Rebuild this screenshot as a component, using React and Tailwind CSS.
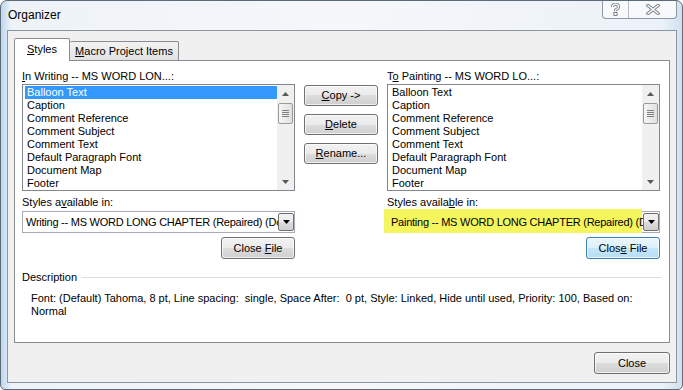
import React from "react";

const styleNames = [
  "Balloon Text",
  "Caption",
  "Comment Reference",
  "Comment Subject",
  "Comment Text",
  "Default Paragraph Font",
  "Document Map",
  "Footer",
];

const Arrow = ({ up, color = "#5a5a5a" }) => (
  <svg width="7" height="4" viewBox="0 0 7 4">
    <path d={up ? "M3.5 0L7 4H0Z" : "M0 0H7L3.5 4Z"} fill={color} />
  </svg>
);

const ScrollBar = () => (
  <div className="flex w-[17px] flex-col items-center bg-[#f0f0f0]">
    <div className="flex h-[17px] w-full items-center justify-center">
      <Arrow up />
    </div>
    <div className="mt-[1px] flex h-[21px] w-[15px] flex-col items-center justify-center gap-[1px] rounded-[2px] border border-[#9a9a9a] bg-[linear-gradient(90deg,#f6f6f6,#e0e0e0)]">
      <div className="h-px w-[7px] bg-[#808080]" />
      <div className="h-px w-[7px] bg-[#808080]" />
      <div className="h-px w-[7px] bg-[#808080]" />
      <div className="h-px w-[7px] bg-[#808080]" />
    </div>
    <div className="flex-1" />
    <div className="flex h-[17px] w-full items-center justify-center">
      <Arrow />
    </div>
  </div>
);

const StyleList = ({ selected }) => (
  <div className="mt-[1px] flex h-[107px] border border-[#828790] bg-white">
    <div className="flex flex-1 flex-col pl-[2px] pt-[1px]">
      {styleNames.map((name, i) => (
        <div
          key={name}
          className={`h-[13px] pl-[2px] text-[11px] leading-[13px] ${
            selected && i === 0 ? "bg-[#3399ff] text-white" : "text-black"
          }`}
        >
          {name}
        </div>
      ))}
    </div>
    <ScrollBar />
  </div>
);

const Combo = ({ text, highlight }) => (
  <div className="relative mt-[2px] flex h-[22px] border border-[#a5acb5] bg-white">
    {highlight && (
      <div className="absolute left-[-4px] top-[-3px] h-[24px] w-[258px] bg-[#f5f55e]" />
    )}
    <div className="relative flex-1 overflow-hidden whitespace-nowrap pl-[3px] text-[11px] leading-[20px] tracking-[-0.25px]">
      {text}
    </div>
    <div className="relative my-[1px] flex w-[16px] items-center justify-center rounded-[2px] border border-[#707070] bg-[linear-gradient(#f2f2f2_0%,#ebebeb_50%,#dddddd_50%,#cfcfcf_100%)]">
      <Arrow color="#000" />
    </div>
  </div>
);

const Btn = ({ children, className = "", focused = false }) => (
  <button
    className={`flex items-center justify-center rounded-[3px] border text-[11px] text-black shadow-[inset_0_0_0_1px_rgba(255,255,255,0.7)] ${
      focused
        ? "border-[#3c7fb1] bg-[linear-gradient(#eaf6fd_0%,#dcf0fb_50%,#c6e6f8_50%,#b6def5_100%)]"
        : "border-[#707070] bg-[linear-gradient(#f2f2f2_0%,#ebebeb_50%,#dddddd_50%,#cfcfcf_100%)]"
    } ${className}`}
  >
    {children}
  </button>
);

const Column = ({ label, comboLabel, comboText, selected, highlight, focused }) => (
  <div className="flex w-[273px] flex-col">
    <div className="h-[13px] text-[11px] leading-[13px]">{label}</div>
    <StyleList selected={selected} />
    <div className="mt-[5px] h-[13px] text-[11px] leading-[13px]">{comboLabel}</div>
    <Combo text={comboText} highlight={highlight} />
    <div className="mt-[4px] flex justify-end">
      <Btn focused={focused} className="h-[22px] w-[74px]">
        {focused ? (
          <span>
            Clos<span className="underline">e</span> File
          </span>
        ) : (
          <span>
            Close <span className="underline">F</span>ile
          </span>
        )}
      </Btn>
    </div>
  </div>
);

const App = () => {
  return (
    <div className="h-[390px] w-[683px] overflow-hidden font-['Liberation_Sans',Arial,sans-serif] text-black">
      <div className="flex h-full flex-col rounded-t-[7px] rounded-b-[5px] border border-[#5d6b79] bg-[linear-gradient(90deg,#bcd6ee_0%,#eef3f8_1.5%,#f5f7fa_50%,#ecf2f8_97%,#cfe0f0_100%)]">
        {/* title bar */}
        <div className="flex h-[29px] items-start">
          <div className="pl-[7px] pt-[6px] text-[12px] leading-[16px]">Organizer</div>
          <div className="ml-auto mr-[5px] flex h-[18px] rounded-b-[4px] border border-t-0 border-[#8c98a5] bg-[#f7f9fb]">
            <div className="flex w-[26px] items-center justify-center border-r border-[#b5bec8]">
              <svg width="9" height="13" viewBox="0 0 9 13">
                <path
                  d="M1.5 4Q1.5 1.2 4.5 1.2Q7.5 1.2 7.5 3.8Q7.5 5.6 5.2 6.5L4.5 7V8.3"
                  fill="none"
                  stroke="#7a848e"
                  strokeWidth="3"
                />
                <path
                  d="M1.5 4Q1.5 1.2 4.5 1.2Q7.5 1.2 7.5 3.8Q7.5 5.6 5.2 6.5L4.5 7V8.3"
                  fill="none"
                  stroke="#fff"
                  strokeWidth="1.2"
                />
                <rect x="3" y="9.5" width="3" height="3" fill="#fff" stroke="#7a848e" strokeWidth="1" />
              </svg>
            </div>
            <div className="flex w-[47px] items-center justify-center">
              <svg width="14" height="11" viewBox="0 0 14 11">
                <path d="M2 1.5L12 9.5M12 1.5L2 9.5" stroke="#7a848e" strokeWidth="3.4" strokeLinecap="square" />
                <path d="M2 1.5L12 9.5M12 1.5L2 9.5" stroke="#fff" strokeWidth="1.4" strokeLinecap="square" />
              </svg>
            </div>
          </div>
        </div>

        {/* client area */}
        <div className="ml-[6px] mr-[5px] flex flex-col border border-[#8d96a0] bg-[#f0f0f0] px-[6px] pb-[8px] pt-[7px]">
          {/* tabs */}
          <div className="relative z-10 flex h-[22px] items-end">
            <div className="-mb-px flex h-[23px] w-[56px] items-center justify-center rounded-t-[2px] border border-b-0 border-[#898c95] bg-white pb-[1px] text-[11px]">
              <span>
                <span className="underline">S</span>tyles
              </span>
            </div>
            <div className="flex h-[19px] w-[109px] items-center justify-center rounded-t-[2px] border border-b-0 border-l-0 border-[#898c95] bg-[linear-gradient(#f3f3f3,#e1e1e1)] text-[11px]">
              <span>
                <span className="underline">M</span>acro Project Items
              </span>
            </div>
          </div>

          {/* tab panel */}
          <div className="flex h-[283px] flex-col border border-[#898c95] bg-white pl-[7px] pr-[8px] pt-[9px]">
            <div className="flex items-start">
              <Column
                label={
                  <span>
                    <span className="underline">I</span>n Writing -- MS WORD LON...:
                  </span>
                }
                comboLabel={
                  <span>
                    Styles a<span className="underline">v</span>ailable in:
                  </span>
                }
                comboText="Writing -- MS WORD LONG CHAPTER (Repaired) (Do"
                selected
              />
              <div className="ml-[9px] mt-[15px] flex w-[74px] flex-col gap-[8px]">
                <Btn className="h-[21px] w-full">
                  <span>
                    <span className="underline">C</span>opy -&gt;
                  </span>
                </Btn>
                <Btn className="h-[21px] w-full">
                  <span>
                    <span className="underline">D</span>elete
                  </span>
                </Btn>
                <Btn className="h-[21px] w-full">
                  <span>
                    <span className="underline">R</span>ename...
                  </span>
                </Btn>
              </div>
              <div className="ml-[9px]">
                <Column
                  label={
                    <span>
                      T<span className="underline">o</span> Painting -- MS WORD LO...:
                    </span>
                  }
                  comboLabel={
                    <span>
                      Styles availa<span className="underline">b</span>le in:
                    </span>
                  }
                  comboText="Painting -- MS WORD LONG CHAPTER (Repaired) (D"
                  highlight
                  focused
                />
              </div>
            </div>

            {/* description */}
            <div className="mt-[12px] flex h-[13px] items-center">
              <span className="text-[11px] leading-[13px]">Description</span>
              <div className="ml-[4px] h-px flex-1 bg-[#d5dfe5]" />
            </div>
            <div className="mt-[8px] pl-[9px] text-[11px] leading-[13px]">
              <div className="whitespace-pre">
                {"Font: (Default) Tahoma, 8 pt, Line spacing:  single, Space After:  0 pt, Style: Linked, Hide until used, Priority: 100, Based on:"}
              </div>
              <div>Normal</div>
            </div>
          </div>

          {/* bottom buttons */}
          <div className="mt-[9px] flex justify-end">
            <Btn className="h-[22px] w-[76px]">Close</Btn>
          </div>
        </div>
      </div>
    </div>
  );
};

export default App;
